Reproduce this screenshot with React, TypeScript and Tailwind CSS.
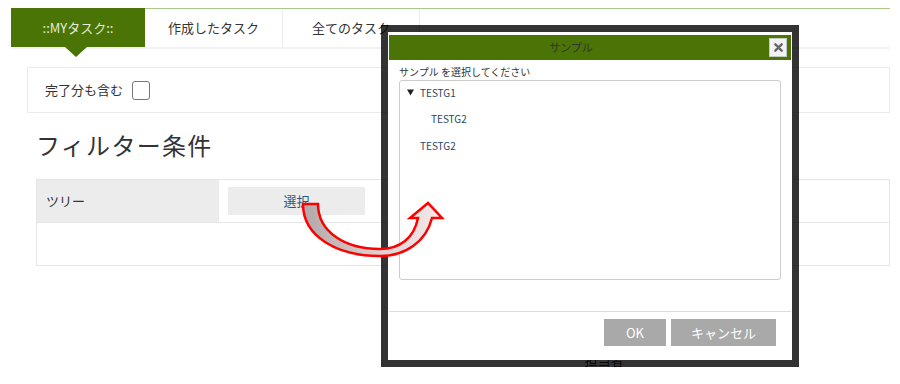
export default function App() {
  return (
    <div className="relative w-[900px] h-[384px] overflow-hidden bg-white text-[#333] font-['Noto_Sans_CJK_JP','Liberation_Sans',sans-serif]">
      <div className="pt-[8px] pl-[11px] pr-[10px]">
        {/* tabs */}
        <div className="flex h-[41px] border-t border-t-[#a9c98a] border-b-2 border-b-[#f2f2f2]">
          <div className="relative -mt-px w-[134px] h-[39px] bg-[#4a7406] text-[#e4ecd8] text-[13px] flex items-center justify-center">
            ::MYタスク::
            <div className="absolute left-[54px] top-full w-0 h-0 border-x-[11px] border-x-transparent border-t-[10px] border-t-[#4a7406]" />
          </div>
          <div className="w-[138px] border-r border-[#ececec] text-[13px] flex items-center justify-center">作成したタスク</div>
          <div className="w-[137px] border-r border-[#ececec] text-[13px] flex items-center justify-center">全てのタスク</div>
        </div>

        {/* checkbox panel */}
        <div className="ml-[16px] mt-[18px] h-[46px] border border-[#ebebeb] pl-[17px] flex items-center gap-[9px] text-[13px]">
          <span>完了分も含む</span>
          <div className="w-[18px] h-[19px] border-[1.5px] border-[#777] rounded-[3px] bg-white" />
        </div>

        {/* heading */}
        <div className="ml-[25px] mt-[16px] h-[32px] leading-[32px] text-[24px] tracking-[1.3px]">フィルター条件</div>

        {/* table */}
        <div className="ml-[25px] mt-[18px] border border-[#e6e6e6]">
          <div className="flex h-[42px]">
            <div className="w-[182px] bg-[#ececec] pl-[9px] flex items-center text-[13px]">ツリー</div>
            <div className="pl-[9px] flex items-center">
              <div className="w-[137px] h-[28px] bg-[#ececec] text-[#2a5580] text-[13px] flex items-center justify-center">選択</div>
            </div>
          </div>
          <div className="h-[43px] border-t border-[#e6e6e6]" />
        </div>

        {/* partially hidden header row */}
        <div className="mt-[82px] ml-[544px] flex h-[24px]">
          <div className="w-[98px] flex items-center justify-center text-[13px]">担当者</div>
          <div className="w-[74px]" />
        </div>
      </div>

      {/* modal */}
      <div className="absolute left-[381px] top-[25px] w-[418px] h-[342px] border-[7px] border-black/80 bg-white bg-clip-padding">
        <div className="pt-[3px] px-[1px] flex flex-col h-full">
          <div className="relative h-[25px] bg-[#4a7406] pr-[38px] flex items-center justify-center text-[11px] text-[#333]">
            サンプル
            <div className="absolute right-[4px] top-[3px] w-[18px] h-[19px] bg-[#f4f4f4] border border-[#c8c8c8] flex items-center justify-center">
              <svg width="9" height="9" viewBox="0 0 10 10">
                <path d="M1.5 1.5 L8.5 8.5 M8.5 1.5 L1.5 8.5" stroke="#666" strokeWidth="2.6" strokeLinecap="round" />
              </svg>
            </div>
          </div>
          <div className="px-[10px]">
            <div className="mt-[5px] h-[14px] leading-[14px] text-[10px] text-[#333]">サンプル を選択してください</div>
            <div className="mt-[1px] h-[200px] border border-[#ccc] rounded-[3px] flex flex-col gap-[4px] text-[10px] text-[#2b4560]">
              <div className="h-[22px] pl-[7px] flex items-center">
                <svg width="7" height="7" viewBox="0 0 7 7">
                  <path d="M0 0.5 L7 0.5 L3.5 6.5 Z" fill="#222" />
                </svg>
                <span className="ml-[6px]">TESTG1</span>
              </div>
              <div className="h-[22px] pl-[31px] flex items-center">TESTG2</div>
              <div className="h-[22px] pl-[20px] flex items-center mt-[1px]">TESTG2</div>
            </div>
          </div>
          <div className="mt-[31px] border-t border-[#dcdcdc] pt-[7px] pr-[15px] flex justify-end gap-[5px]">
            <div className="w-[62px] h-[27px] bg-[#a9a9a9] text-white text-[13px] flex items-center justify-center">OK</div>
            <div className="w-[105px] h-[27px] bg-[#a9a9a9] text-white text-[13px] flex items-center justify-center">キャンセル</div>
          </div>
        </div>
      </div>

      {/* arrow */}
      <svg className="absolute left-0 top-0 pointer-events-none" width="900" height="384" viewBox="0 0 900 384">
        <defs>
          <linearGradient id="ag" x1="303" y1="0" x2="442" y2="0" gradientUnits="userSpaceOnUse">
            <stop offset="0" stopColor="#b2a8a8" />
            <stop offset="0.5" stopColor="#d8cece" />
            <stop offset="1" stopColor="#f5ebeb" />
          </linearGradient>
        </defs>
        <path
          d="M303 204 L318 204 C318 232 345 249 380 249 C400 249 414 238 418 218 L410 218 L428 203 L442 218 L432 218 C426 242 405 256 380 256 C336 256 303 236 303 204 Z"
          fill="url(#ag)"
          stroke="#ff0000"
          strokeWidth="2.5"
          strokeLinejoin="miter"
        />
      </svg>
    </div>
  );
}
